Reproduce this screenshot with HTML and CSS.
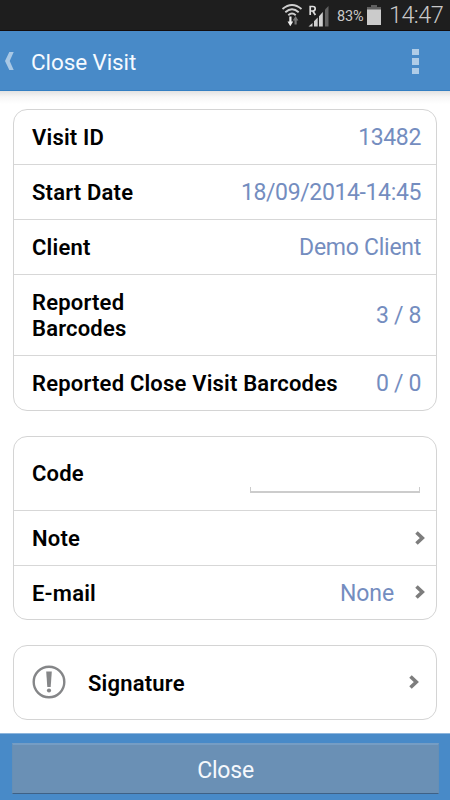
FILE: index.html
```html
<!DOCTYPE html>
<html lang="en">
<head>
<meta charset="utf-8">
<title>Close Visit</title>
<link rel="stylesheet" href="styles.css">
</head>
<body>
<div class="statusbar">
  <svg class="status-icons" width="50" height="24" viewBox="0 0 50 24">
    <g fill="none" stroke="#cfcfcf" stroke-width="1.9">
      <path d="M1.500 6Q11 -2 20.500 6"/>
      <path d="M4.300 9.200Q11 3.300 17.700 9.200"/>
      <path d="M7.300 12.300Q11 8.800 14.700 12.300"/>
    </g>
    <path d="M8.300 13.500h2.200v5h1.700l-2.900 4.800-2.800-4.800h1.800z" fill="#eee"/>
    <path d="M13.500 21.500v-4h-1.800l2.900-4.500 2.800 4.500h-1.700v4z" fill="#777"/>
    <path d="M27.500 23.500l4-3.600v3.600zM33 18.300l3.700-3.700v8.900H33zM38 13.300l3.800-4.200v14.400H38z" fill="#d0d0d0"/>
    <path d="M44 6.500l3.500-3.500v20.500H44z" fill="#626262"/>
    <path d="M29.200 12V3.500h2.600q2.400 0 2.400 2.200T31.800 8h-2.600M31.700 8l2.700 4" fill="none" stroke="#dedede" stroke-width="1.700"/>
  </svg>
  <span class="percent">83%</span>
  <svg class="battery" width="14" height="20" viewBox="0 0 14 20">
    <path d="M4 0h6v2h4v3H0V2h4z" fill="#606060"/>
    <path d="M0 4.500h14V20H0z" fill="#cbcbcb"/>
  </svg>
  <span class="clock">14:47</span>
</div>
<header class="header">
  <svg class="back" width="9" height="18" viewBox="0 0 9 18"><path d="M4.300 0H8.700L4.700 9l4 9H4.300L0 9z" fill="#a9c8e5"/></svg>
  <h1 class="title">Close Visit</h1>
  <div class="menu"><i></i><i></i><i></i></div>
</header>
<main class="content">
  <section class="card">
    <div class="row"><span class="label">Visit ID</span><span class="value number">13482</span></div>
    <div class="row"><span class="label">Start Date</span><span class="value number">18/09/2014-14:45</span></div>
    <div class="row"><span class="label">Client</span><span class="value">Demo Client</span></div>
    <div class="row double"><span class="label">Reported<br>Barcodes</span><span class="value number">3 / 8</span></div>
    <div class="row"><span class="label">Reported Close Visit Barcodes</span><span class="value number">0 / 0</span></div>
  </section>
  <section class="card">
    <div class="row tall"><span class="label">Code</span><span class="field"></span></div>
    <div class="row"><span class="label">Note</span><svg class="chevron" width="10" height="14" viewBox="0 0 10 14"><path d="M1.500 1.500L7.300 7l-5.800 5.500"/></svg></div>
    <div class="row last"><span class="label">E-mail</span><span class="value none">None</span><svg class="chevron" width="10" height="14" viewBox="0 0 10 14"><path d="M1.500 1.500L7.300 7l-5.800 5.500"/></svg></div>
  </section>
  <section class="card">
    <div class="row signature">
      <svg class="alert" width="34" height="34" viewBox="0 0 34 34">
        <circle cx="17" cy="17" r="15.300" fill="none" stroke="#858688" stroke-width="2.400"/>
        <path d="M14.200 6.500h5.600l-1.100 15.500h-3.400z" fill="#858688"/>
        <circle cx="17" cy="25.500" r="2.100" fill="#858688"/>
      </svg>
      <span class="label">Signature</span>
      <svg class="chevron" width="10" height="14" viewBox="0 0 10 14"><path d="M1.500 1.500L7.300 7l-5.800 5.500"/></svg>
    </div>
  </section>
</main>
<footer class="footer"><button class="close">Close</button></footer>
</body>
</html>
```

FILE: styles.css
```css
* { box-sizing: border-box; }
body {
  margin: 0;
  width: 450px;
  height: 800px;
  overflow: hidden;
  display: flex;
  flex-direction: column;
  background: #fff;
  font-family: Roboto, "Liberation Sans", sans-serif;
}
.statusbar {
  height: 31px;
  flex: none;
  display: flex;
  align-items: center;
  justify-content: flex-end;
  padding-right: 8px;
  background: #1e1e1e;
  border-bottom: 1px solid #130c0c;
  color: #c9c9c9;
}
.status-icons { margin: 0 6px 0 0; }
.percent { width: 28px; font-size: 14.5px; letter-spacing: -.1px; white-space: nowrap; padding-top: 2px; }
.battery { margin: 0 8px 0 2px; }
.clock { width: 53px; font-size: 23.5px; font-weight: 300; letter-spacing: -.6px; white-space: nowrap; text-align: right; }
.header {
  height: 60px;
  flex: none;
  display: flex;
  align-items: center;
  padding: 2px 31px 0 5px;
  background: #488ac8;
  border-bottom: 1px solid #347fc2;
}
.back { margin-top: -2px; }
.title { margin: 0 0 0 17px; font-size: 22.5px; font-weight: 400; letter-spacing: -.1px; color: #f6faff; white-space: nowrap; }
.menu { margin-left: auto; display: grid; gap: 3px; }
.menu i { width: 7px; height: 6.500px; background: #afcce7; }
.content {
  height: 642px;
  flex: none;
  padding: 18px 13px 0;
  background: linear-gradient(#e2e2e2, #f6f6f6 6px, #fff 13px);
}
.card { width: 424px; border: 1px solid #d4d4d4; border-radius: 14px; margin-bottom: 25px; background: #fff; }
.row { height: 55px; padding: 2px 15px 0 18px; display: flex; align-items: center; justify-content: space-between; border-bottom: 1px solid #d7d7d7; }
.row:last-child { border-bottom: 0; height: 54px; }
.row.double { height: 81px; }
.row.tall { height: 74px; padding-top: 1px; }
.row.last { height: 53px; }
.row.signature { height: 73px; padding: 2px 17px 0 18px; }
.label { font-size: 22px; line-height: 26px; font-weight: 600; letter-spacing: .19px; color: #000; white-space: nowrap; }
.value { font-size: 23px; line-height: 26px; letter-spacing: -.27px; color: #748dbf; white-space: nowrap; }
.number { letter-spacing: -.37px; }
.field { width: 170px; height: 6px; border: 1px solid #ccc; border-top: 0; border-bottom-width: 2px; margin-top: 32px; margin-right: 1px; }
.chevron { flex: none; margin: -3px -4px 0 0; }
.chevron path { fill: none; stroke: #7d7d7d; stroke-width: 3.600; }
.none { margin-left: auto; margin-right: 21px; letter-spacing: -.1px; }
.alert { margin: -3px 22px 0 0; }
.signature .label { margin-right: auto; }
.signature .chevron { margin-right: 0; }
.footer { height: 67px; flex: none; padding: 9px 11px 6px 12px; background: #488ac8; border-top: 1px solid #8db5dc; }
.close {
  width: 427px;
  height: 51px;
  display: block;
  padding: 2px 0 0;
  border: solid #668fb5;
  border-width: 2px 1px 1px;
  border-top-color: #759dc4;
  border-bottom-color: #3e6186;
  background: #6a90b5;
  color: #f5f8fc;
  font-family: inherit;
  font-size: 23px;
  letter-spacing: -.2px;
}
```
